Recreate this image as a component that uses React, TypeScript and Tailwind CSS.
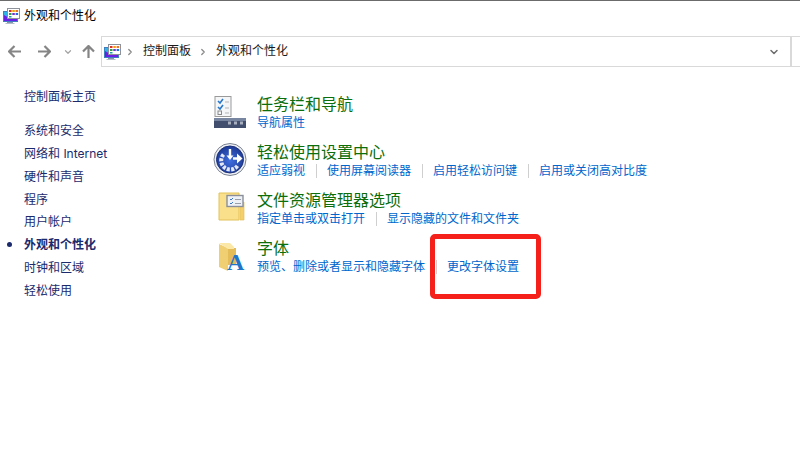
import { ChevronDown, ChevronRight } from "lucide-react";

const FONT = "font-['Inter','Noto_Sans_CJK_SC',sans-serif]";

function WindowIcon() {
  return (
    <svg width="17" height="16" viewBox="0 0 17 16">
      <rect x="0.500" y="3.500" width="14" height="10" fill="#2f8fdc" stroke="#3f7fc0" />
      <rect x="1" y="4" width="3.500" height="9" fill="#2fb4e8" />
      <path d="M1 7l7 4 6 0v2H1z" fill="#6a1fe6" />
      <rect x="4.500" y="0.500" width="12" height="10" fill="#fff" stroke="#8d929b" />
      <rect x="6" y="2" width="2.500" height="2" fill="#e02b20" />
      <rect x="9.300" y="2" width="2.500" height="2" fill="#f2a500" />
      <rect x="12.600" y="2" width="2.500" height="2" fill="#e8742a" />
      <rect x="6" y="5" width="2.500" height="2" fill="#2f9e44" />
      <rect x="9.300" y="5" width="2.500" height="2" fill="#7a2fd0" />
      <rect x="12.600" y="5" width="2.500" height="2" fill="#1f6fe0" />
      <rect x="6" y="8" width="2.500" height="1.500" fill="#1f9fa8" />
      <rect x="4" y="14" width="6" height="1" fill="#8796ab" />
      <rect x="2.500" y="15" width="9" height="1" fill="#b2bdca" />
    </svg>
  );
}

function NavArrow({ rotate }: { rotate: string }) {
  return (
    <svg width="13" height="13" viewBox="0 0 13 13" className={rotate}>
      <path d="M1 6.500h12M6.500 1L1 6.500 6.500 12" fill="none" stroke="#858585" strokeWidth="2.200" />
    </svg>
  );
}

function TaskbarIcon() {
  return (
    <svg width="34" height="34" viewBox="0 0 34 34">
      <rect x="2" y="1.500" width="16" height="20" fill="#f4f6f8" stroke="#9a9a9a" />
      <path d="M5 6l2 2 3-4" fill="none" stroke="#2a78c8" strokeWidth="1.600" />
      <path d="M5 12l2 2 3-4" fill="none" stroke="#2a78c8" strokeWidth="1.600" />
      <rect x="5" y="16" width="3.500" height="3.500" fill="none" stroke="#8a8a8a" />
      <path d="M12 7h4M12 13h4M12 18h4" stroke="#b5b5b5" />
      <rect x="1" y="23" width="32" height="10" fill="#414e6e" />
      <rect x="1" y="23" width="32" height="3" fill="#7885a0" />
      <rect x="15" y="26.500" width="3" height="3" fill="#a8b0c0" />
      <rect x="21" y="26.500" width="3" height="3" fill="#a8b0c0" />
      <rect x="27" y="26.500" width="3" height="3" fill="#a8b0c0" />
    </svg>
  );
}

function AccessIcon() {
  return (
    <svg width="34" height="34" viewBox="0 0 34 34">
      <defs>
        <radialGradient id="accessFill" cx="50%" cy="55%" r="55%">
          <stop offset="0%" stopColor="#3f6fe0" />
          <stop offset="100%" stopColor="#1d3a96" />
        </radialGradient>
      </defs>
      <circle cx="17" cy="16.500" r="16" fill="#eef0f4" stroke="#7b8392" />
      <circle cx="17" cy="16.500" r="13.500" fill="url(#accessFill)" stroke="#1a2f78" />
      <path d="M10.500 11.500A9 9 0 1 0 25 22" fill="none" stroke="#e4e8f2" strokeWidth="4" strokeDasharray="3 1.300" />
      <path d="M17 6v8" stroke="#fff" strokeWidth="2.400" />
      <path d="M13.500 12.500h7l-3.500 4.500z" fill="#fff" />
      <path d="M20 15.500h5" stroke="#fff" strokeWidth="2.500" />
      <path d="M24 10.500l5.500 5-5.500 5z" fill="#fff" />
    </svg>
  );
}

function FolderOptionsIcon() {
  return (
    <svg width="34" height="34" viewBox="0 0 34 34">
      <path d="M6 2h20v27H6z" fill="#fbe08c" stroke="#e2c25a" />
      <path d="M27 13l4-2v18h-4z" fill="#f4cf6a" stroke="#e2c25a" strokeWidth="0.700" />
      <rect x="14" y="4.500" width="16" height="11" fill="#eef1f6" stroke="#8a8f99" strokeWidth="1.400" />
      <path d="M17 8l1 1 2-2M17 12l1 1 2-2" fill="none" stroke="#3a78c8" strokeWidth="1" />
      <path d="M22 8.500h6M22 12.500h6" stroke="#9aa0aa" strokeWidth="1.200" />
    </svg>
  );
}

function FontIcon() {
  return (
    <svg width="34" height="34" viewBox="0 0 34 34" className="overflow-visible">
      <path d="M6 5l9 4v23l-9-4z" fill="#f0cf72" />
      <path d="M15 9h8v17h-8z" fill="#e4bc58" />
      <path d="M6 4h11l4 4v2h-6z" fill="#fbe7a6" />
      <text x="14" y="31" fontFamily="'Liberation Serif', serif" fontWeight="700" fontSize="24" fill="#1f76c8">A</text>
    </svg>
  );
}

const nav = ["系统和安全", "网络和 Internet", "硬件和声音", "程序", "用户帐户", "外观和个性化", "时钟和区域", "轻松使用"];

const items = [
  { title: "任务栏和导航", icon: <TaskbarIcon />, links: ["导航属性"] },
  { title: "轻松使用设置中心", icon: <AccessIcon />, links: ["适应弱视", "使用屏幕阅读器", "启用轻松访问键", "启用或关闭高对比度"] },
  { title: "文件资源管理器选项", icon: <FolderOptionsIcon />, links: ["指定单击或双击打开", "显示隐藏的文件和文件夹"] },
  { title: "字体", icon: <FontIcon />, links: ["预览、删除或者显示和隐藏字体", "更改字体设置"] },
];

export default function App() {
  return (
    <div className={`relative w-[800px] h-[450px] overflow-hidden bg-white text-[12px] ${FONT}`}>
      <div className="h-px bg-[#6b6b6b]" />

      {/* 标题栏 */}
      <div className="h-[30px] flex items-center gap-[4px] pl-[3px]">
        <WindowIcon />
        <span className="text-[12px] text-black">外观和个性化</span>
      </div>

      {/* 地址栏 */}
      <div className="h-[31px] mt-[5px] flex items-center">
        <div className="w-[101px] flex items-center pl-[8px]">
          <NavArrow rotate="" />
          <NavArrow rotate="rotate-180 ml-[17px]" />
          <ChevronDown size={10} strokeWidth={3} className="ml-[12px] text-[#a5a5a5]" />
          <NavArrow rotate="rotate-90 ml-[9px]" />
        </div>
        <div className="w-[691px] h-[31px] border border-[#d9d9d9] border-r-2 flex items-center pl-[2px]">
          <WindowIcon />
          <ChevronRight size={10} strokeWidth={3} className="ml-[4px] text-[#8a8a8a]" />
          <span className="ml-[8px] pb-px text-[#1a1a1a]">控制面板</span>
          <ChevronRight size={10} strokeWidth={3} className="ml-[7px] text-[#8a8a8a]" />
          <span className="ml-[8px] pb-px text-[#1a1a1a]">外观和个性化</span>
          <ChevronDown size={12} strokeWidth={3} className="ml-auto mr-[10px] text-[#6d6d6d]" />
        </div>
        <div className="flex-1 h-[31px] border-y border-[#d9d9d9]" />
      </div>

      <div className="flex">
        {/* 左侧导航 */}
        <div className="w-[213px] pl-[24px] pt-[21px] shrink-0">
          <div className="h-[18px] leading-[18px] text-[#1a2a6c]">控制面板主页</div>
          <div className="mt-[16px] flex flex-col gap-[4.85px]">
            {nav.map((n) => (
              <div
                key={n}
                className={`relative h-[18px] leading-[18px] text-[#1a2a6c] ${n === "外观和个性化" ? "font-bold" : ""}`}
              >
                {n === "外观和个性化" && (
                  <span className="absolute left-[-17px] top-[6px] w-[5px] h-[5px] rounded-full bg-[#1a2a6c]" />
                )}
                {n}
              </div>
            ))}
          </div>
        </div>

        {/* 内容 */}
        <div className="pt-[26px] flex flex-col gap-[9px]">
          {items.map((it) => (
            <div key={it.title} className="h-[39px] flex">
              <div className="w-[44px] shrink-0 pt-[2px]">{it.icon}</div>
              <div>
                <div className="h-[21px] leading-[22px] text-[16px] text-[#0b6e0b]">{it.title}</div>
                <div className="h-[17px] flex items-center">
                  {it.links.map((l, i) => (
                    <div key={l} className="flex items-center">
                      {i > 0 && <span className="w-px h-[14px] bg-[#cfcfcf] mx-[10.5px]" />}
                      <span className="text-[#0066cc] leading-[17px]">{l}</span>
                    </div>
                  ))}
                </div>
              </div>
            </div>
          ))}
        </div>
      </div>

      {/* 红框标注 */}
      <div className="absolute left-[430px] top-[234px] w-[111px] h-[65px] border-[5px] border-[#f5201a] rounded-[5px]" />
    </div>
  );
}
